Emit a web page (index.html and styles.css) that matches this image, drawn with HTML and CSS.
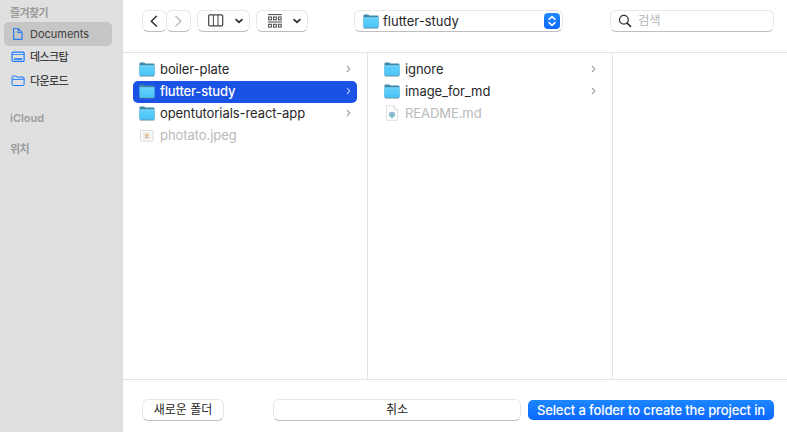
FILE: index.html
```html
<!DOCTYPE html>
<html lang="ko">
<head>
<meta charset="utf-8">
<title>Documents</title>
<link rel="stylesheet" href="styles.css">
</head>
<body>
<svg class="defs" aria-hidden="true">
  <defs>
    <linearGradient id="folder-face" x1="0" y1="0" x2="0" y2="1">
      <stop offset="0" stop-color="#5fd0fc"/><stop offset="1" stop-color="#4cc3f5"/>
    </linearGradient>
    <symbol id="folder" viewBox="0 0 16 15">
      <path d="M.5 1.6Q.5.5 1.6.5H5L6.4 1.6H14.4Q15.5 1.6 15.5 2.7V13H.5Z" fill="#3d87a8"/>
      <path d="M.5 3.4H15.5V13Q15.5 14 14.5 14H1.5Q.5 14 .5 13Z" fill="url(#folder-face)"/>
      <path d="M.5 3.9H15.5" stroke="#8ae0ff" stroke-width=".7"/>
      <path d="M.8 14.1H15.2" stroke="#5b8496" stroke-width=".8"/>
    </symbol>
    <symbol id="arrow" viewBox="0 0 5 8">
      <path d="M1 1 3.8 4 1 7" fill="none" stroke="currentColor" stroke-width="1.1"/>
    </symbol>
    <symbol id="down" viewBox="0 0 8 6">
      <path d="M1.1 1.6 4 4.4 6.9 1.6" fill="none" stroke="#303030" stroke-width="1.8" stroke-linecap="round" stroke-linejoin="round"/>
    </symbol>
  </defs>
</svg>
<div class="dialog">
  <aside class="sidebar">
    <h2 class="heading heading-korean">즐겨찾기</h2>
    <div class="place place-active">
      <svg width="14" height="14" viewBox="0 0 14 14"><path d="M2.6 1.5H7.2L11 5.3V12.3H2.6ZM7.1 1.7V5.5H10.8" fill="none" stroke="#2b7de9" stroke-width="1.2" stroke-linejoin="round"/></svg>
      <span class="latin">Documents</span>
    </div>
    <div class="place">
      <svg width="14" height="14" viewBox="0 0 14 14"><rect x="1.1" y="2.2" width="12" height="9.2" rx="1" fill="none" stroke="#1879ff" stroke-width="1.2"/><path d="M1.4 4.5H12.9" stroke="#1879ff" stroke-width=".8"/><path d="M3.1 9H11.2" stroke="#1879ff" stroke-width="1.6"/></svg>
      <span>데스크탑</span>
    </div>
    <div class="place">
      <svg width="14" height="14" viewBox="0 0 14 14"><path d="M1.1 10.5V3Q1.1 2 2.1 2H4.9L6.2 3.1H12Q13.1 3.1 13.1 4.1V10.5Q13.1 11.5 12 11.5H2.1Q1.1 11.5 1.1 10.5M1.2 5.3H13" fill="none" stroke="#1879ff" stroke-width="1"/></svg>
      <span>다운로드</span>
    </div>
    <h2 class="heading heading-cloud">iCloud</h2>
    <h2 class="heading heading-korean heading-location">위치</h2>
  </aside>
  <main class="main">
    <header class="toolbar">
      <div class="control nav"><svg width="9" height="13" viewBox="0 0 9 13"><path d="M6.4 1.3 1.3 6.2 6.4 11.1" fill="none" stroke="#252525" stroke-width="1.4" stroke-linecap="round" stroke-linejoin="round"/></svg></div>
      <div class="control nav"><svg width="9" height="13" viewBox="0 0 9 13"><path d="M1.8 1.3 6.9 6.2 1.8 11.1" fill="none" stroke="#b5b5b5" stroke-width="1.2" stroke-linecap="round" stroke-linejoin="round"/></svg></div>
      <div class="control view">
        <svg class="glyph" width="16" height="13" viewBox="0 0 16 13"><rect x=".7" y=".8" width="14" height="11" rx="1" fill="none" stroke="#444" stroke-width="1.2"/><path d="M5.4 1V12M10 1V12" stroke="#444"/></svg>
        <svg width="8" height="6"><use href="#down"/></svg>
      </div>
      <div class="control view group">
        <svg class="glyph" width="16" height="14" viewBox="0 0 16 14" fill="none" stroke="#484848"><path d="M1 .6H15M1 8H15"/><rect x="1.6" y="3" width="2.8" height="2.8"/><rect x="6.5" y="3" width="2.8" height="2.8"/><rect x="11.4" y="3" width="2.8" height="2.8"/><rect x="1.6" y="10.3" width="2.8" height="2.8"/><rect x="6.5" y="10.3" width="2.8" height="2.8"/><rect x="11.4" y="10.3" width="2.8" height="2.8"/></svg>
        <svg width="8" height="6"><use href="#down"/></svg>
      </div>
      <div class="control path">
        <svg width="16" height="15"><use href="#folder"/></svg>
        <span>flutter-study</span>
        <span class="stepper"><svg width="16" height="16" viewBox="0 0 16 16"><path d="M5 6.4 8 3.6 11 6.4M5 9.6 8 12.4 11 9.6" fill="none" stroke="#fff" stroke-width="1.5" stroke-linecap="round" stroke-linejoin="round"/></svg></span>
      </div>
      <div class="control search">
        <svg width="14" height="14" viewBox="0 0 14 14"><circle cx="5.9" cy="5.8" r="4.4" fill="none" stroke="#303030" stroke-width="1.3"/><path d="M9.1 9.1 12.5 12.4" stroke="#303030" stroke-width="1.6" stroke-linecap="round"/></svg>
        <span>검색</span>
      </div>
    </header>
    <section class="browser">
      <div class="column">
        <div class="row"><svg width="16" height="15"><use href="#folder"/></svg><span class="name">boiler-plate</span><svg class="arrow" width="5" height="8"><use href="#arrow"/></svg></div>
        <div class="row row-selected"><svg width="16" height="15"><use href="#folder"/></svg><span class="name">flutter-study</span><svg class="arrow" width="5" height="8"><use href="#arrow"/></svg></div>
        <div class="row"><svg width="16" height="15"><use href="#folder"/></svg><span class="name">opentutorials-react-app</span><svg class="arrow" width="5" height="8"><use href="#arrow"/></svg></div>
        <div class="row row-disabled"><svg width="16" height="15" viewBox="0 0 16 15"><rect x="1.5" y="2.5" width="12.5" height="10.5" rx=".7" fill="#fff" stroke="#d8d8d8"/><rect x="3.4" y="4.4" width="8.8" height="6.7" fill="#ececec"/><circle cx="7.8" cy="7.2" r="1.8" fill="#e8c294"/><path d="M5.9 10.4 7.8 8 9.7 10.4Z" fill="#cdb9a2"/></svg><span class="name">photato.jpeg</span></div>
      </div>
      <div class="column">
        <div class="row"><svg width="16" height="15"><use href="#folder"/></svg><span class="name">ignore</span><svg class="arrow" width="5" height="8"><use href="#arrow"/></svg></div>
        <div class="row"><svg width="16" height="15"><use href="#folder"/></svg><span class="name">image_for_md</span><svg class="arrow" width="5" height="8"><use href="#arrow"/></svg></div>
        <div class="row row-disabled"><svg width="16" height="16" viewBox="0 0 16 16"><path d="M2.5.7H9.8L13.5 4.4V15.3H2.5ZM9.7.8V4.5H13.4" fill="#fff" stroke="#dcdcdc" stroke-width=".9"/><path d="M5.3 6.8 6.8 7.4 8 6.6 9.2 7.4 10.7 6.8V10H11.5L8 13.6 4.5 10H5.3Z" fill="#85b6ca"/></svg><span class="name">README.md</span></div>
      </div>
      <div class="column column-last"></div>
    </section>
    <footer class="footer">
      <div class="control button new-folder">새로운 폴더</div>
      <div class="control button cancel">취소</div>
      <div class="button primary"><span>Select a folder to create the project in</span></div>
    </footer>
  </main>
</div>
</body>
</html>
```

FILE: styles.css
```css
* { box-sizing: border-box; }
body {
  margin: 0;
  overflow: hidden;
  background: #fff;
  color: #272727;
  font: 13px/16px Inter, "Noto Sans CJK KR", sans-serif;
}
svg { display: block; flex: none; }
.defs { position: absolute; width: 0; height: 0; }
.dialog { display: flex; width: 787px; height: 432px; }
.sidebar {
  width: 123px;
  padding: 5px 10px 0 4px;
  background: #e0e0e0;
  border-right: 1px solid #dadada;
  font-size: 11px;
}
.heading {
  margin: 0 0 1px 6px;
  font-size: 11px;
  line-height: 16px;
  font-weight: 600;
  color: #9c9c9c;
}
.heading-korean { letter-spacing: -.6px; }
.place {
  display: flex;
  align-items: center;
  gap: 5px;
  width: 108px;
  height: 24px;
  padding: 0 0 2px 7px;
  border-radius: 5px;
  color: #404040;
}
.place span { letter-spacing: -.6px; font-weight: 500; }
.place .latin { letter-spacing: 0; font-weight: 400; }
.place-active { padding-bottom: 1px; background: #c6c6c6; }
.heading-cloud { margin-top: 16px; }
.heading-location { margin-top: 15px; }
.main { display: flex; flex: 1; flex-direction: column; min-width: 0; }
.toolbar {
  display: flex;
  height: 53px;
  padding: 10px 13px 0 19px;
  border-bottom: 1px solid #e3e3e3;
}
.control {
  display: flex;
  align-items: center;
  height: 22px;
  border: 1px solid #e7e7e7;
  border-bottom-color: #bebebe;
  border-radius: 6px;
  background: #fff;
}
.nav { width: 25px; justify-content: center; }
.nav + .nav { margin-left: -1px; }
.view { width: 53px; margin-left: 6px; padding: 0 6px 0 10px; justify-content: space-between; }
.glyph { margin-bottom: 1px; }
.group { width: 52px; }
.path { width: 209px; margin-left: 46px; padding: 0 2px 0 8px; gap: 4px; }
.path > span:first-of-type { margin-bottom: 1px; }
.stepper { margin-left: auto; border-radius: 4px; background: linear-gradient(#218bff, #0868ff); }
.search { width: 164px; margin-left: auto; padding-left: 7px; gap: 6px; color: #b5b5b5; font-size: 12.5px; letter-spacing: -.4px; }
.browser { display: flex; height: 326px; }
.column { width: 245px; padding: 6px 10px 0; border-right: 1px solid #e3e3e3; }
.column-last { flex: 1; border-right: 0; }
.row {
  display: flex;
  align-items: center;
  gap: 5px;
  height: 22px;
  padding: 0 6px 2px;
  border-radius: 5px;
}
.name { letter-spacing: -.07px; }
.row-selected { background: #1a52e5; color: #fff; font-weight: 500; }
.row-selected .name { letter-spacing: -.17px; }
.row-disabled { color: #b9b9b9; }
.arrow { margin-left: auto; color: #a1a1a1; }
.row-selected .arrow { color: #a9c0ff; }
.footer {
  display: flex;
  flex: 1;
  border-top: 1px solid #e3e3e3;
  padding: 19px 13px 0 19px;
}
.button { display: flex; justify-content: center; align-items: center; height: 22px; }
.new-folder { width: 82px; font-size: 12px; }
.cancel { width: 248px; margin-left: 49px; font-size: 12px; }
.primary {
  width: 246px;
  height: 20px;
  margin: 1px 0 0 7px;
  padding-bottom: 1px;
  border-radius: 5px;
  background: linear-gradient(#1c86ff, #0c68ff);
  color: #fff;
  font-weight: 500;
  letter-spacing: -.12px;
  white-space: nowrap;
}
```
